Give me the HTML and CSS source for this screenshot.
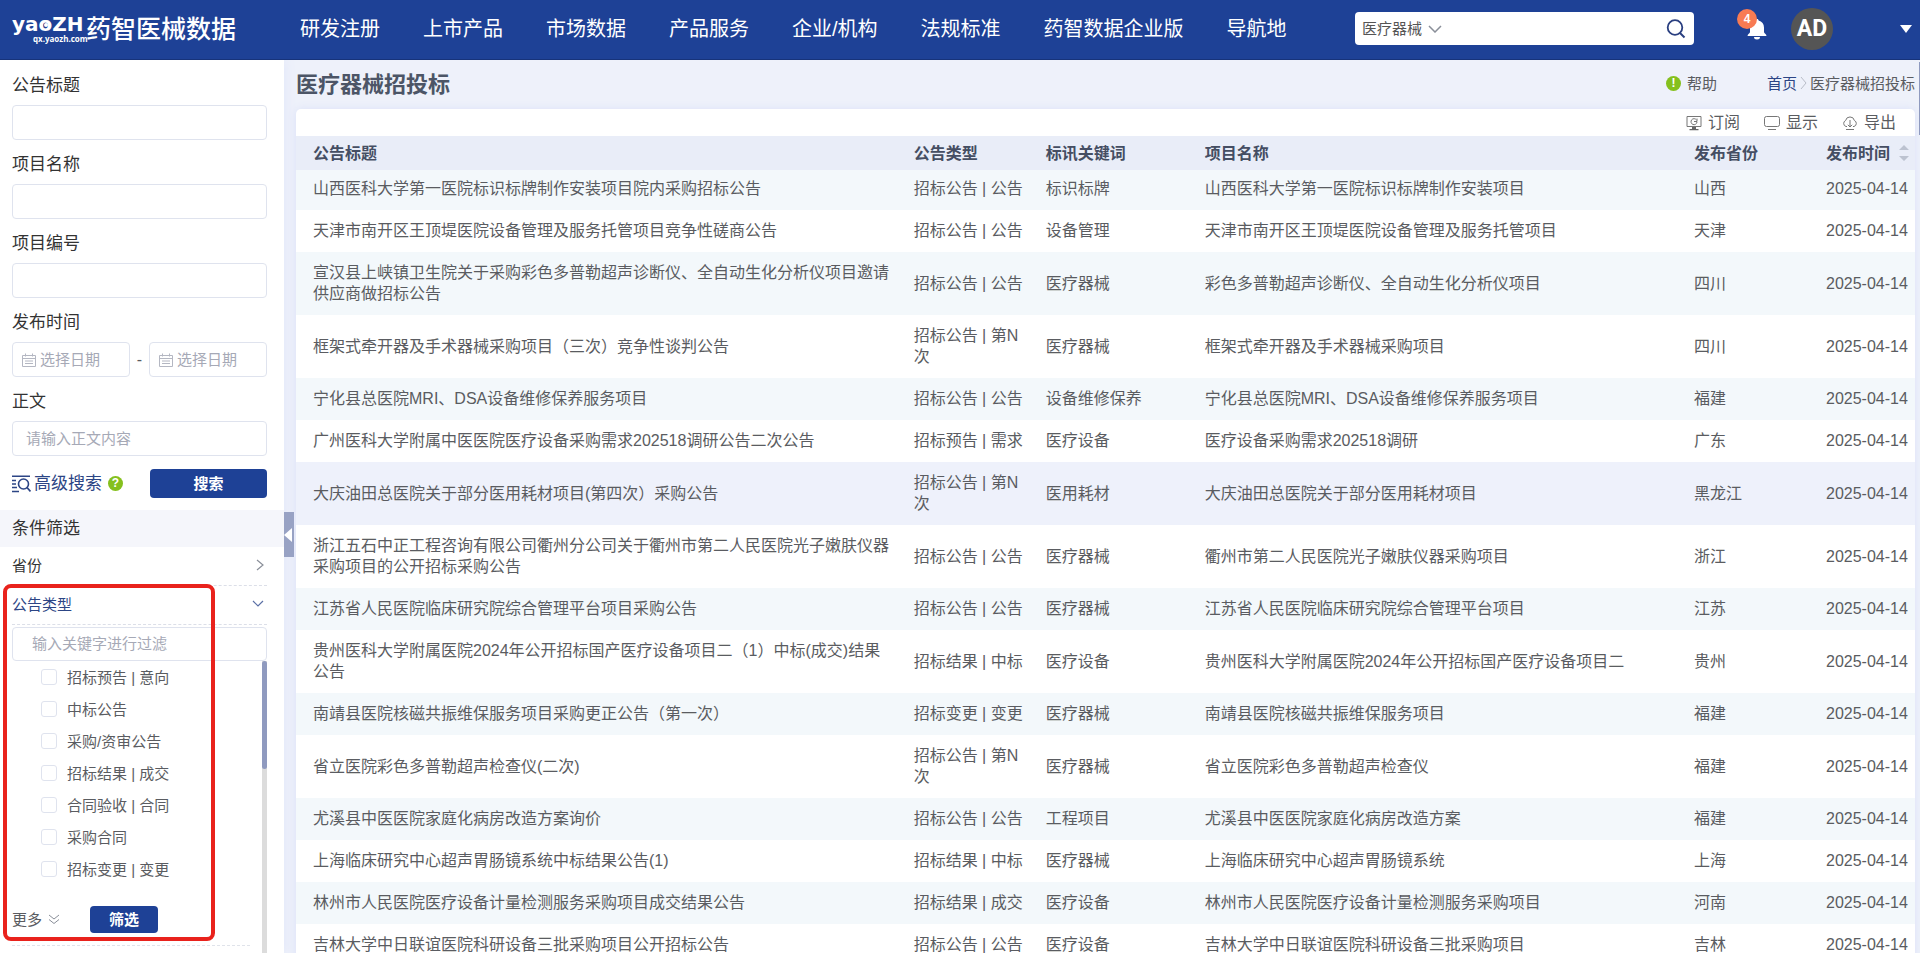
FILE: index.html
```html
<!DOCTYPE html>
<html lang="zh-CN">
<head>
<meta charset="utf-8">
<title>医疗器械招投标</title>
<link rel="stylesheet" href="styles.css">
</head>
<body>
<header class="topbar">
  <a class="logo" href="#" aria-label="药智医械数据">
    <svg width="226" height="36" viewBox="0 0 226 36">
      <text class="logo-latin" x="0" y="20">yaoZH</text>
      <circle cx="34" cy="14" r="2" fill="#fff"/>
      <text class="logo-url" x="21" y="31">qx.yaozh.com</text>
      <text class="logo-cn" x="74" y="27">药智医械数据</text>
    </svg>
  </a>
  <nav class="nav">
    <a href="#">研发注册</a>
    <a href="#">上市产品</a>
    <a href="#">市场数据</a>
    <a href="#">产品服务</a>
    <a href="#">企业/机构</a>
    <a href="#">法规标准</a>
    <a href="#">药智数据企业版</a>
    <a href="#">导航地</a>
  </nav>
  <form class="search">
    <select class="search-scope" aria-label="搜索范围"><option>医疗器械</option></select>
    <svg class="search-caret" width="14" height="8" viewBox="0 0 14 8"><path d="M1 1l6 6 6-6" fill="none" stroke="#8a8f99" stroke-width="1.5"/></svg>
    <input class="search-text" type="text" aria-label="关键词">
    <button class="icon-button" type="button" aria-label="搜索">
      <svg width="20" height="20" viewBox="0 0 20 20"><circle cx="9" cy="8.5" r="7.3" fill="none" stroke="#2a3f80" stroke-width="1.8"/><path d="M14 14l4.5 4.5" stroke="#2a3f80" stroke-width="2"/></svg>
    </button>
  </form>
  <button class="bell icon-button" type="button" aria-label="消息">
    <svg width="22" height="22" viewBox="0 0 22 22"><path d="M11 1c-1 0-1.600.7-1.600 1.600C6 3.400 4 6 4 9.500v4.500c0 1.500-2.500 2-2.500 4h19c0-2-2.500-2.500-2.500-4V9.500c0-3.500-2-6.100-5.400-6.900C12.600 1.700 12 1 11 1z" fill="#fff"/><path d="M8 19h6a3 2.500 0 0 1-6 0z" fill="#fff"/></svg>
    <span class="badge">4</span>
  </button>
  <span class="avatar">AD</span>
  <button class="account icon-button" type="button" aria-label="账户菜单">
    <svg width="12" height="8" viewBox="0 0 12 8"><path d="M0 0h12L6 8z" fill="#fff"/></svg>
  </button>
</header>

<div class="layout">
  <aside class="sidebar">
    <form class="filters">
      <div class="field"><label for="f-title">公告标题</label><input id="f-title" type="text"></div>
      <div class="field"><label for="f-name">项目名称</label><input id="f-name" type="text"></div>
      <div class="field"><label for="f-code">项目编号</label><input id="f-code" type="text"></div>
      <div class="field">
        <label for="f-from">发布时间</label>
        <div class="dates">
          <div class="date">
            <svg width="14" height="14" viewBox="0 0 14 14"><path d="M.5 2.500h13v11H.5zM.5 5.500h13M3.500.5v3M10.500.5v3M3 8h8M3 10.500h8" fill="none" stroke="#b4b7c2"/></svg>
            <input id="f-from" type="text" placeholder="选择日期">
          </div>
          <span>-</span>
          <div class="date">
            <svg width="14" height="14" viewBox="0 0 14 14"><path d="M.5 2.500h13v11H.5zM.5 5.500h13M3.500.5v3M10.500.5v3M3 8h8M3 10.500h8" fill="none" stroke="#b4b7c2"/></svg>
            <input type="text" placeholder="选择日期" aria-label="结束日期">
          </div>
        </div>
      </div>
      <div class="field"><label for="f-body">正文</label><input id="f-body" type="text" placeholder="请输入正文内容"></div>
      <div class="actions">
        <a class="advanced" href="#">
          <svg width="19" height="18" viewBox="0 0 19 18"><path d="M0 1.200h18M0 5.500h4M0 9h4M0 12.500h5M0 16.500h7" stroke="#2c4585" stroke-width="1.400" fill="none"/><circle cx="11.500" cy="9" r="5" fill="none" stroke="#2c4585" stroke-width="1.600"/><path d="M15 12.500l3.500 4" stroke="#2c4585" stroke-width="1.800"/></svg>
          <span>高级搜索</span>
        </a>
        <span class="dot">?</span>
        <button class="primary submit" type="button">搜索</button>
      </div>
    </form>
    <h2 class="band">条件筛选</h2>
    <div class="facets">
      <button class="facet" type="button">省份
        <svg width="8" height="12" viewBox="0 0 8 12"><path d="M1 1l6 5-6 5" fill="none" stroke="#8a8f99" stroke-width="1.200"/></svg>
      </button>
      <button class="facet facet-open" type="button">公告类型
        <svg width="12" height="8" viewBox="0 0 12 8"><path d="M1 1l5 5 5-5" fill="none" stroke="#5a6fa5" stroke-width="1.200"/></svg>
      </button>
      <input class="facet-search" type="text" placeholder="输入关键字进行过滤" aria-label="过滤公告类型">
      <div class="facet-body">
        <div class="facet-content">
          <ul class="options">
            <li><label><input type="checkbox">招标预告 | 意向</label></li>
            <li><label><input type="checkbox">中标公告</label></li>
            <li><label><input type="checkbox">采购/资审公告</label></li>
            <li><label><input type="checkbox">招标结果 | 成交</label></li>
            <li><label><input type="checkbox">合同验收 | 合同</label></li>
            <li><label><input type="checkbox">采购合同</label></li>
            <li><label><input type="checkbox">招标变更 | 变更</label></li>
          </ul>
          <div class="facet-footer">
            <a class="more" href="#">更多
              <svg width="12" height="11" viewBox="0 0 12 11"><path d="M1 1l5 4 5-4M1 5.500l5 4 5-4" fill="none" stroke="#8a8f99"/></svg>
            </a>
            <button class="primary apply" type="button">筛选</button>
          </div>
        </div>
        <div class="track"><div class="thumb"></div></div>
      </div>
      <div class="highlight"></div>
    </div>
    <button class="collapse" type="button" aria-label="收起侧栏">
      <svg width="8" height="14" viewBox="0 0 8 14"><path d="M8 0v14L0 7z" fill="#fff"/></svg>
    </button>
  </aside>

  <main class="main">
    <div class="heading">
      <h1>医疗器械招投标</h1>
      <a class="help" href="#"><span class="dot">!</span>帮助</a>
      <div class="crumbs">
        <a href="#">首页</a>
        <svg width="7" height="14" viewBox="0 0 7 14"><path d="M1 1l5 6-5 6" fill="none" stroke="#b9bdc8"/></svg>
        <span>医疗器械招投标</span>
      </div>
    </div>
    <section class="card">
      <div class="tools">
        <button type="button">
          <svg width="16" height="16" viewBox="0 0 16 16"><path d="M1 1.500h14v10H1z" fill="none" stroke="#777"/><path d="M10.500 5a3 3 0 1 0 .5 2M8 6.500h3v-3" fill="none" stroke="#777"/><path d="M6 12h4v2h2.500v1.200h-9V14H6z" fill="#666"/></svg>订阅</button>
        <button type="button">
          <svg width="16" height="16" viewBox="0 0 16 16"><rect x=".5" y="1.500" width="15" height="10" rx="2" fill="none" stroke="#777"/><path d="M4 14.500h8" stroke="#777"/></svg>显示</button>
        <button type="button">
          <svg width="16" height="16" viewBox="0 0 16 16"><path d="M5 11.500H4A3.200 3.200 0 0 1 3.600 5.500a4.500 4.500 0 0 1 8.800 0A3.200 3.200 0 0 1 12 11.500h-1M8 5v7M5.800 9.800L8 12l2.200-2.200M4 14.500h8" fill="none" stroke="#777"/></svg>导出</button>
      </div>
      <table class="grid">
        <colgroup><col class="c-title"><col class="c-type"><col class="c-key"><col><col class="c-prov"><col class="c-date"></colgroup>
        <thead>
          <tr><th>公告标题</th><th>公告类型</th><th>标讯关键词</th><th>项目名称</th><th>发布省份</th>
            <th><span class="sortable">发布时间<svg width="10" height="18" viewBox="0 0 10 18"><path d="M0 6l5-5 5 5zM0 12h10l-5 5z" fill="#bcc2d0"/></svg></span></th></tr>
        </thead>
        <tbody>
          <tr><td>山西医科大学第一医院标识标牌制作安装项目院内采购招标公告</td><td>招标公告 | 公告</td><td>标识标牌</td><td>山西医科大学第一医院标识标牌制作安装项目</td><td>山西</td><td>2025-04-14</td></tr>
          <tr><td>天津市南开区王顶堤医院设备管理及服务托管项目竞争性磋商公告</td><td>招标公告 | 公告</td><td>设备管理</td><td>天津市南开区王顶堤医院设备管理及服务托管项目</td><td>天津</td><td>2025-04-14</td></tr>
          <tr><td>宣汉县上峡镇卫生院关于采购彩色多普勒超声诊断仪、全自动生化分析仪项目邀请供应商做招标公告</td><td>招标公告 | 公告</td><td>医疗器械</td><td>彩色多普勒超声诊断仪、全自动生化分析仪项目</td><td>四川</td><td>2025-04-14</td></tr>
          <tr><td>框架式牵开器及手术器械采购项目（三次）竞争性谈判公告</td><td>招标公告 | 第N次</td><td>医疗器械</td><td>框架式牵开器及手术器械采购项目</td><td>四川</td><td>2025-04-14</td></tr>
          <tr><td>宁化县总医院MRI、DSA设备维修保养服务项目</td><td>招标公告 | 公告</td><td>设备维修保养</td><td>宁化县总医院MRI、DSA设备维修保养服务项目</td><td>福建</td><td>2025-04-14</td></tr>
          <tr><td>广州医科大学附属中医医院医疗设备采购需求202518调研公告二次公告</td><td>招标预告 | 需求</td><td>医疗设备</td><td>医疗设备采购需求202518调研</td><td>广东</td><td>2025-04-14</td></tr>
          <tr class="hover"><td>大庆油田总医院关于部分医用耗材项目(第四次）采购公告</td><td>招标公告 | 第N次</td><td>医用耗材</td><td>大庆油田总医院关于部分医用耗材项目</td><td>黑龙江</td><td>2025-04-14</td></tr>
          <tr><td>浙江五石中正工程咨询有限公司衢州分公司关于衢州市第二人民医院光子嫩肤仪器采购项目的公开招标采购公告</td><td>招标公告 | 公告</td><td>医疗器械</td><td>衢州市第二人民医院光子嫩肤仪器采购项目</td><td>浙江</td><td>2025-04-14</td></tr>
          <tr><td>江苏省人民医院临床研究院综合管理平台项目采购公告</td><td>招标公告 | 公告</td><td>医疗器械</td><td>江苏省人民医院临床研究院综合管理平台项目</td><td>江苏</td><td>2025-04-14</td></tr>
          <tr><td>贵州医科大学附属医院2024年公开招标国产医疗设备项目二（1）中标(成交)结果公告</td><td>招标结果 | 中标</td><td>医疗设备</td><td>贵州医科大学附属医院2024年公开招标国产医疗设备项目二</td><td>贵州</td><td>2025-04-14</td></tr>
          <tr><td>南靖县医院核磁共振维保服务项目采购更正公告（第一次）</td><td>招标变更 | 变更</td><td>医疗器械</td><td>南靖县医院核磁共振维保服务项目</td><td>福建</td><td>2025-04-14</td></tr>
          <tr><td>省立医院彩色多普勒超声检查仪(二次)</td><td>招标公告 | 第N次</td><td>医疗器械</td><td>省立医院彩色多普勒超声检查仪</td><td>福建</td><td>2025-04-14</td></tr>
          <tr><td>尤溪县中医医院家庭化病房改造方案询价</td><td>招标公告 | 公告</td><td>工程项目</td><td>尤溪县中医医院家庭化病房改造方案</td><td>福建</td><td>2025-04-14</td></tr>
          <tr><td>上海临床研究中心超声胃肠镜系统中标结果公告(1)</td><td>招标结果 | 中标</td><td>医疗器械</td><td>上海临床研究中心超声胃肠镜系统</td><td>上海</td><td>2025-04-14</td></tr>
          <tr><td>林州市人民医院医疗设备计量检测服务采购项目成交结果公告</td><td>招标结果 | 成交</td><td>医疗设备</td><td>林州市人民医院医疗设备计量检测服务采购项目</td><td>河南</td><td>2025-04-14</td></tr>
          <tr><td>吉林大学中日联谊医院科研设备三批采购项目公开招标公告</td><td>招标公告 | 公告</td><td>医疗设备</td><td>吉林大学中日联谊医院科研设备三批采购项目</td><td>吉林</td><td>2025-04-14</td></tr>
        </tbody>
      </table>
    </section>
    <div class="page-thumb"></div>
  </main>
</div>
</body>
</html>
```
FILE: styles.css
```css
* { box-sizing: border-box; }

body {
  margin: 0;
  height: 100vh;
  overflow: hidden;
  display: flex;
  flex-direction: column;
  font: 16px/21px "Liberation Sans", "Noto Sans CJK SC", sans-serif;
  color: #5a5c61;
  background: #eef1fa;
}

a { color: inherit; text-decoration: none; }
svg { display: block; flex: none; }
button, input, select { font: inherit; color: inherit; }
button { cursor: pointer; }
h1, h2, ul { margin: 0; padding: 0; }
input::placeholder { color: #a6a9b6; opacity: 1; }

.icon-button {
  padding: 0;
  border: 0;
  background: none;
}

.primary {
  padding: 0;
  border: 0;
  border-radius: 4px;
  background: #1e4196;
  color: #fff;
  font-size: 15px;
  font-weight: bold;
}

.dot {
  width: 15px;
  height: 15px;
  border-radius: 50%;
  background: #85c01d;
  color: #fff;
  font-size: 12px;
  font-weight: bold;
  line-height: 15px;
  text-align: center;
}

/* Top bar */
.topbar {
  position: relative;
  z-index: 1;
  flex: none;
  height: 60px;
  display: flex;
  align-items: center;
  padding: 0 8px 2px 12px;
  background: #1e4196;
  border-bottom: 1px solid #17337a;
  color: #fff;
}
.logo { margin-right: 62px; }
.logo svg { overflow: visible; }
.logo text { fill: #fff; }
.logo-latin { font: bold 20px "DejaVu Sans", sans-serif; }
.logo-url { font: bold 8px "Open Sans", sans-serif; }
.logo-cn { font: 500 25px "Noto Sans CJK SC", sans-serif; }
.nav {
  display: flex;
  gap: 43px;
  font-size: 20px;
  line-height: 28px;
  white-space: nowrap;
}
.search {
  width: 339px;
  height: 33px;
  margin-left: auto;
  padding: 0 8px 0 7px;
  display: flex;
  align-items: center;
  border-radius: 4px;
  background: #fff;
  color: #555;
  font-size: 15px;
}
.search-scope {
  appearance: none;
  padding: 0;
  border: 0;
  background: none;
}
.search-caret { margin-left: 5px; }
.search-text {
  flex: 1;
  min-width: 0;
  border: 0;
  outline: 0;
  background: none;
}
.bell {
  position: relative;
  margin-left: 52px;
}
.badge {
  position: absolute;
  left: -9px;
  top: -9px;
  width: 20px;
  height: 20px;
  border-radius: 50%;
  background: #f87b53;
  color: #fff;
  font-size: 12px;
  font-weight: bold;
  line-height: 20px;
  text-align: center;
}
.avatar {
  width: 42px;
  height: 42px;
  margin-left: 23px;
  border-radius: 50%;
  background: #555;
  font: bold 23px/42px "Roboto", sans-serif;
  text-align: center;
}
.account { margin-left: 67px; }

/* Page body */
.layout {
  flex: 1;
  min-height: 0;
  display: flex;
}

/* Sidebar */
.sidebar {
  position: relative;
  flex: none;
  width: 284px;
  padding-top: 1px;
  display: flex;
  flex-direction: column;
  background: #fff;
  box-shadow: 0 0 12px #dfe5fa;
}
.filters { padding: 0 17px 12px 12px; }
.field {
  padding-top: 13px;
  display: flex;
  flex-direction: column;
  gap: 7px;
}
.field label {
  color: #333;
  font-size: 17px;
  line-height: 24px;
}
.field > input, .date, .facet-search {
  height: 35px;
  border: 1px solid #dfe3ee;
  border-radius: 4px;
  background: #fff;
  font-size: 15px;
}
.field > input { padding: 0 13px; }
.dates {
  display: flex;
  align-items: center;
}
.dates > span {
  width: 19px;
  text-align: center;
}
.date {
  flex: 1;
  min-width: 0;
  display: flex;
  align-items: center;
  gap: 4px;
  padding-left: 9px;
}
.date input {
  flex: 1;
  min-width: 0;
  padding: 0;
  border: 0;
  background: none;
}
.actions {
  margin-top: 13px;
  display: flex;
  align-items: center;
}
.advanced {
  display: flex;
  align-items: center;
  gap: 3px;
  color: #2c4585;
  font-size: 17px;
}
.actions .dot { margin-left: 6px; }
.submit {
  width: 117px;
  height: 29px;
  margin-left: auto;
}
.band {
  height: 37px;
  padding-left: 12px;
  background: #f5f6fb;
  color: #333;
  font-size: 17px;
  font-weight: normal;
  line-height: 38px;
}
.facets {
  position: relative;
  flex: 1;
  min-height: 0;
  margin: 0 17px 0 12px;
  display: flex;
  flex-direction: column;
}
.facet {
  flex: none;
  height: 39px;
  padding: 0 3px 2px 0;
  display: flex;
  align-items: center;
  justify-content: space-between;
  border: 0;
  border-bottom: 1px dashed #dcdfe8;
  background: none;
  color: #333;
  font-size: 15px;
}
.facet-open { color: #2c4585; }
.facet-search {
  flex: none;
  height: 34px;
  margin-top: 2px;
  padding: 0 19px 2px;
}
.facet-body {
  flex: 1;
  min-height: 0;
  display: flex;
}
.facet-content { flex: 1; }
.track {
  width: 5px;
  background: #dcdcdc;
}
.thumb {
  height: 37%;
  border-radius: 3px;
  background: #8f9abf;
}
.options {
  padding-left: 29px;
  list-style: none;
}
.options label {
  height: 32px;
  display: flex;
  align-items: center;
  gap: 10px;
  font-size: 15px;
}
.options input {
  appearance: none;
  width: 16px;
  height: 16px;
  margin: 0;
  border: 1px solid #dfe3ee;
  border-radius: 3px;
  background: #fff;
}
.facet-footer {
  margin: 21px 12px 0 0;
  padding-bottom: 12px;
  display: flex;
  align-items: center;
  gap: 30px;
  border-bottom: 1px dashed #e0e3ea;
}
.more {
  display: flex;
  align-items: center;
  gap: 6px;
  font-size: 15px;
}
.apply {
  width: 68px;
  height: 27px;
}
.highlight {
  position: absolute;
  left: -9px;
  top: 37px;
  width: 212px;
  height: 357px;
  border: 4px solid #e9221c;
  border-radius: 8px;
  pointer-events: none;
}
.collapse {
  position: absolute;
  right: -10px;
  top: 452px;
  z-index: 1;
  width: 10px;
  height: 45px;
  padding: 0 2px 0 0;
  border: 0;
  background: #98a2c4;
}

/* Results */
.main {
  position: relative;
  flex: 1;
  min-width: 0;
  padding: 0 5px 0 12px;
}
.heading {
  height: 49px;
  display: flex;
  align-items: center;
  font-size: 15px;
}
.heading h1 {
  color: #4c5566;
  font-size: 22px;
  line-height: 30px;
}
.help, .crumbs {
  display: flex;
  align-items: center;
  padding-bottom: 3px;
}
.help {
  margin-left: auto;
  gap: 6px;
}
.crumbs {
  margin-left: 50px;
  gap: 3px;
}
.crumbs a { color: #2c4585; }
.card {
  border-radius: 5px;
  background: #fff;
  box-shadow: 0 0 8px #dbe1f8;
}
.tools {
  height: 27px;
  padding-right: 19px;
  display: flex;
  justify-content: flex-end;
  gap: 24px;
}
.tools button {
  padding: 0;
  display: flex;
  align-items: center;
  gap: 6px;
  border: 0;
  background: none;
}
.grid {
  width: 100%;
  table-layout: fixed;
  border-collapse: collapse;
}
.c-title { width: 37.1%; }
.c-type, .c-prov { width: 132px; }
.c-key { width: 159px; }
.c-date { width: 106px; }
.grid th {
  height: 34px;
  padding: 0 0 0 17px;
  background: #e9edf8;
  color: #454e63;
  text-align: left;
}
.grid td { padding: 10px 0 11px 17px; }
.grid td:first-child { padding-right: 6px; }
.grid tbody tr:first-child td { padding-top: 8px; }
.grid tbody tr:nth-child(odd) { background: #f3f8fb; }
.grid tbody tr.hover { background: #eef1fb; }
.sortable {
  display: flex;
  align-items: center;
  gap: 9px;
  white-space: nowrap;
}
.page-thumb {
  position: absolute;
  right: 0;
  top: 2px;
  width: 1px;
  height: 73px;
  background: #8f9abf;
}
```
